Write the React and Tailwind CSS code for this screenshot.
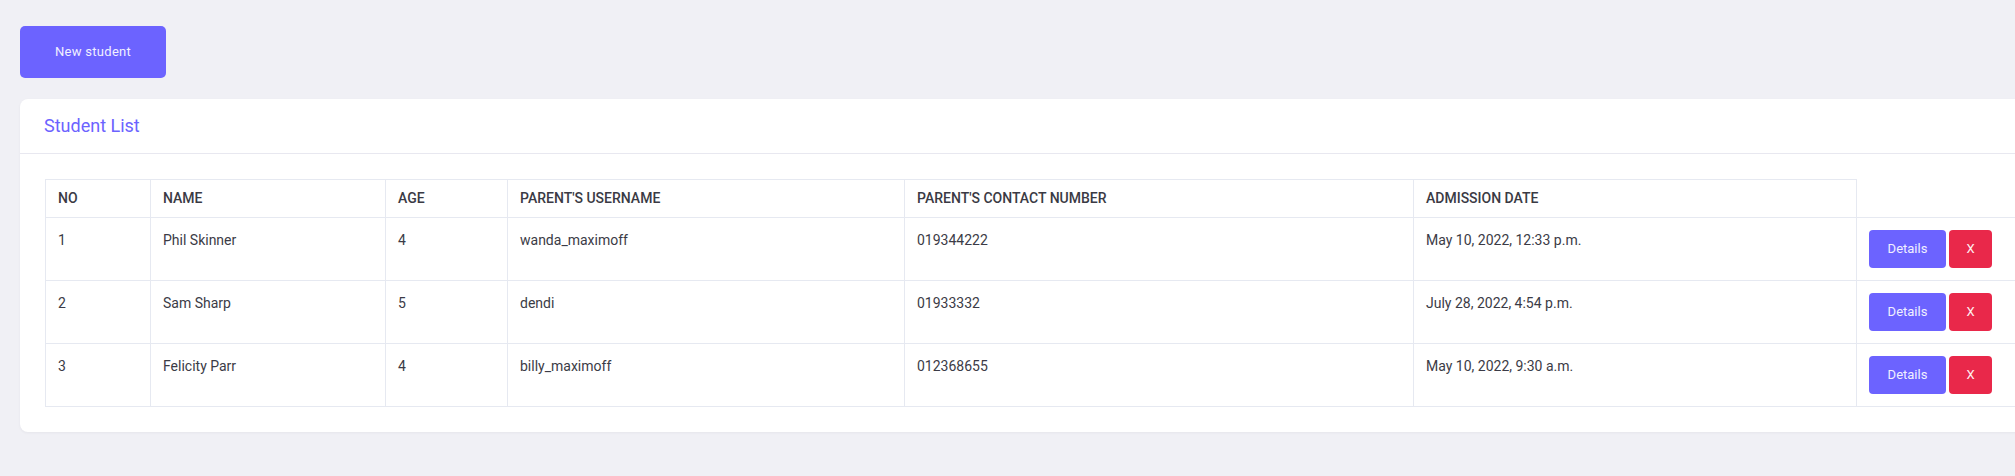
import React from 'react';

const students = [
  { no: 1, name: 'Phil Skinner', age: 4, parent: 'wanda_maximoff', contact: '019344222', date: 'May 10, 2022, 12:33 p.m.' },
  { no: 2, name: 'Sam Sharp', age: 5, parent: 'dendi', contact: '01933332', date: 'July 28, 2022, 4:54 p.m.' },
  { no: 3, name: 'Felicity Parr', age: 4, parent: 'billy_maximoff', contact: '012368655', date: 'May 10, 2022, 9:30 a.m.' },
];

const cols = [
  { label: 'NO', w: 'w-[105px]' },
  { label: 'NAME', w: 'w-[235px]' },
  { label: 'AGE', w: 'w-[122px]' },
  { label: "PARENT'S USERNAME", w: 'w-[397px]' },
  { label: "PARENT'S CONTACT NUMBER", w: 'w-[509px]' },
  { label: 'ADMISSION DATE', w: 'w-[443px]' },
];

export default function App() {
  return (
    <div className="min-h-[476px] w-full overflow-hidden bg-[#f0f0f5] font-['Roboto','Noto_Sans',sans-serif] text-[#3b3b46]">
      <div className="w-[2120px] px-5 pt-[26px] pb-10">
        <button className="w-[146px] h-[52px] rounded-[5px] bg-[#6c63ff] text-[13px] tracking-[0.3px] text-[#f1f0ff]">
          New student
        </button>

        {/* STUDENT LIST CARD */}
        <div className="mt-[21px] bg-white rounded-lg shadow-[0_1px_3px_rgba(30,30,60,0.05)]">
          <div className="px-6 py-4 border-b border-[#e8e8f0]">
            <h2 className="text-[18px] leading-[22px] text-[#6c63ff]">Student List</h2>
          </div>
          <div className="px-[25px] pt-[25px] pb-[25px]">
            <table className="table-fixed border-collapse w-[2051px] text-[14px]">
              <thead>
                <tr>
                  {cols.map((c) => (
                    <th key={c.label} className={`${c.w} border border-[#e6e9f1] px-3 py-2 text-left font-medium leading-[21px] text-[#3a3a44]`}>
                      {c.label}
                    </th>
                  ))}
                  <th className="border-b border-[#e6e9f1]"></th>
                </tr>
              </thead>
              <tbody>
                {students.map((s) => (
                  <tr key={s.no}>
                    <td className="border border-[#e6e9f1] px-3 py-3 align-top leading-[21px]">{s.no}</td>
                    <td className="border border-[#e6e9f1] px-3 py-3 align-top leading-[21px]">{s.name}</td>
                    <td className="border border-[#e6e9f1] px-3 py-3 align-top leading-[21px]">{s.age}</td>
                    <td className="border border-[#e6e9f1] px-3 py-3 align-top leading-[21px]">{s.parent}</td>
                    <td className="border border-[#e6e9f1] px-3 py-3 align-top leading-[21px]">{s.contact}</td>
                    <td className="border border-[#e6e9f1] px-3 py-3 align-top leading-[21px]">{s.date}</td>
                    <td className="border border-[#e6e9f1] px-3 py-3 align-top">
                      <div className="flex gap-[3px]">
                        <button className="w-[77px] h-[38px] rounded-[4px] bg-[#6c63ff] text-[13px] text-[#f1f0ff]">Details</button>
                        <button className="w-[43px] h-[38px] rounded-[4px] bg-[#e9284a] text-[13px] text-[#fff0f2]">X</button>
                      </div>
                    </td>
                  </tr>
                ))}
              </tbody>
            </table>
          </div>
        </div>
      </div>
    </div>
  );
}
